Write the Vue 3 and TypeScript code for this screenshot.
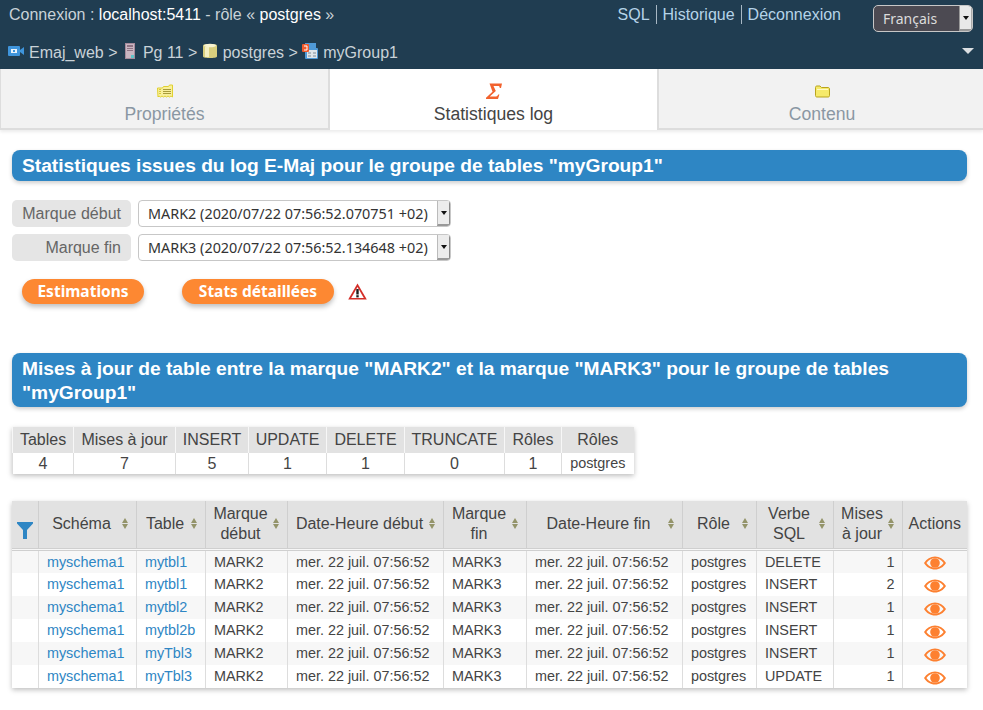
<script setup lang="ts">
const sumHeads = ['Tables', 'Mises à jour', 'INSERT', 'UPDATE', 'DELETE', 'TRUNCATE', 'Rôles', 'Rôles']
const sumVals = ['4', '7', '5', '1', '1', '0', '1', 'postgres']
const sumWidths = [61, 102, 73, 78, 78, 100, 57, 72]
const cols = [26, 98, 69, 82, 156, 83, 156, 74, 77, 69, 65]
const heads = [
  { t: ['Schéma'], s: true },
  { t: ['Table'], s: true },
  { t: ['Marque', 'début'], s: true },
  { t: ['Date-Heure début'], s: true },
  { t: ['Marque', 'fin'], s: true },
  { t: ['Date-Heure fin'], s: true },
  { t: ['Rôle'], s: true },
  { t: ['Verbe', 'SQL'], s: true },
  { t: ['Mises', 'à jour'], s: true },
  { t: ['Actions'], s: false },
]
const rows = [
  ['mytbl1', 'DELETE', '1'],
  ['mytbl1', 'INSERT', '2'],
  ['mytbl2', 'INSERT', '1'],
  ['mytbl2b', 'INSERT', '1'],
  ['myTbl3', 'INSERT', '1'],
  ['myTbl3', 'UPDATE', '1'],
]
const date = 'mer. 22 juil. 07:56:52'
</script>

<template>
  <div class="page">
    <header class="top">
      <div class="line1">
        <div class="conn">Connexion : <b>localhost:5411</b> - rôle « <b>postgres</b> »</div>
        <nav class="links"><a>SQL</a><a>Historique</a><a>Déconnexion</a></nav>
        <div class="lang"><span class="lang-t">Français</span><span class="lang-b"><i></i></span></div>
      </div>
      <div class="crumbs">
        <svg class="ic" width="16" height="16" viewBox="0 0 16 16"><rect x="0" y="3" width="12" height="10" rx="1" fill="#3f95dc"/><rect x="3" y="6" width="6" height="4" fill="#eaf4fc"/><rect x="5" y="7" width="2" height="2" fill="#3f95dc"/><path d="M12 7l4-3v8l-4-3z" fill="#3f95dc"/></svg>
        <span>Emaj_web &gt;</span>
        <svg class="ic" width="16" height="16" viewBox="0 0 16 16"><rect x="3" y="0" width="10" height="16" fill="#a58a9b"/><rect x="4" y="1" width="8" height="14" fill="#c9b6c2"/><rect x="5" y="2" width="6" height="2" fill="#8d7283"/><rect x="5" y="5" width="6" height="1" fill="#8d7283"/><rect x="5" y="7" width="6" height="1" fill="#8d7283"/><rect x="9" y="12" width="3" height="3" fill="#5fc4c9"/></svg>
        <span>Pg 11 &gt;</span>
        <svg class="ic" width="16" height="16" viewBox="0 0 16 16"><path d="M1 2.500C1 .5 15 .5 15 2.500v11c0 2-14 2-14 0z" fill="#d9cf7e"/><path d="M3 4h4v10H3z" fill="#f4efc2"/><ellipse cx="8" cy="2.500" rx="6" ry="1.800" fill="#f8f4d2"/></svg>
        <span>postgres &gt;</span>
        <svg class="ic" width="16" height="16" viewBox="0 0 16 16"><rect x="3" y="0" width="11" height="5" fill="#4f9ad8"/><rect x="3" y="5" width="13" height="11" rx="1" fill="#4f9ad8"/><rect x="5" y="7" width="10" height="8" fill="#dfe4e8"/><path d="M6 10h3M11 10h3M6 13h3M11 13h3" stroke="#7f8a94"/><rect x="0" y="1" width="7" height="8" rx="1" fill="#ef5a2c"/><path d="M2 3h3v4H2" stroke="#fff" fill="none"/></svg>
        <span>myGroup1</span>
        <i class="tri"></i>
      </div>
    </header>

    <div class="tabs">
      <div class="tab">
        <svg width="16" height="14" viewBox="0 0 16 14"><path d="M.5 3.500h5l1-1.500h5l1-1.500h3v12l-1.500-1-1.500 1-1.500-1-1.500 1-1.500-1-1.500 1-1.500-1-1.500 1-1.500-1-1 1z" fill="#f9f09a" stroke="#e0d030"/><path d="M6 5h8M6 7h8M6 9h8" stroke="#a89c3a"/><path d="M2 5h2M2 7h2M2 9h2" stroke="#d8c93a"/></svg>
        <span>Propriétés</span>
      </div>
      <div class="tab on">
        <svg width="16" height="16" viewBox="0 0 16 16"><path d="M3.500 0H16l-1 4.500h-1.300c.1-1.600-.4-2-1.900-2H7.500l2.300 5L3.800 13h5.400c1.600 0 2.300-.5 3-2h1.200L12 15.500H0v-1.200L6.500 8.300z" fill="#f2622e"/></svg>
        <span>Statistiques log</span>
      </div>
      <div class="tab">
        <svg width="15" height="13" viewBox="0 0 15 13"><path d="M.5 10.500V2.500C.5 1.500 1 1 2 1h3l1.500 1.500H13c1 0 1.500.5 1.500 1.500v6.500c0 1-.5 1.500-1.500 1.500H2C1 12 .5 11.500 .5 10.500z" fill="#f6ea6a" stroke="#b9a41f"/><path d="M2 4.500h11" stroke="#fdf9c8"/></svg>
        <span>Contenu</span>
      </div>
    </div>

    <main class="body">
      <h2 class="bar first">Statistiques issues du log E-Maj pour le groupe de tables "myGroup1"</h2>

      <div class="form">
        <div class="frow">
          <label class="flab">Marque début</label>
          <div class="sel"><span>MARK2 (2020/07/22 07:56:52.070751 +02)</span><span class="sel-b"><i></i></span></div>
        </div>
        <div class="frow">
          <label class="flab">Marque fin</label>
          <div class="sel"><span>MARK3 (2020/07/22 07:56:52.134648 +02)</span><span class="sel-b"><i></i></span></div>
        </div>
      </div>

      <div class="actions">
        <button class="btn">Estimations</button>
        <button class="btn second">Stats détaillées</button>
        <svg class="warn" width="19" height="17" viewBox="0 0 19 17"><path d="M9.500 .5L18.800 16.500H.2z" fill="#d42e28"/><path d="M9.500 4L15.800 15H3.200z" fill="#fff"/><path d="M9.500 6v5.500" stroke="#1c1c1c" stroke-width="2.400"/><path d="M9.500 12.200v2.200" stroke="#1c1c1c" stroke-width="2.400"/></svg>
      </div>

      <h2 class="bar second-bar">Mises à jour de table entre la marque "MARK2" et la marque "MARK3" pour le groupe de tables "myGroup1"</h2>

      <table class="tbl sum">
        <colgroup><col v-for="(w, i) in sumWidths" :key="i" :style="{ width: w + 'px' }"></colgroup>
        <thead><tr><th v-for="(h, i) in sumHeads" :key="i">{{ h }}</th></tr></thead>
        <tbody><tr><td v-for="(v, i) in sumVals" :key="i" :class="{ small: i === 7 }">{{ v }}</td></tr></tbody>
      </table>

      <table class="tbl main-t">
        <colgroup><col v-for="(w, i) in cols" :key="i" :style="{ width: w + 'px' }"></colgroup>
        <thead>
          <tr>
            <th class="fil">
              <svg width="16" height="17" viewBox="0 0 16 17"><path d="M0 0h16v1.500L10 8v9H6V8L0 1.500z" fill="#2e86c4"/></svg>
            </th>
            <th v-for="(h, i) in heads" :key="i">
              <div class="hc" :class="{ plain: !h.s }">
                <span class="ht"><span v-for="l in h.t" :key="l" class="hl">{{ l }}</span></span>
                <span v-if="h.s" class="sort"><i class="up"></i><i class="dn"></i></span>
              </div>
            </th>
          </tr>
        </thead>
        <tbody>
          <tr v-for="(r, i) in rows" :key="i">
            <td></td>
            <td class="l"><a>myschema1</a></td>
            <td class="l"><a>{{ r[0] }}</a></td>
            <td class="l">MARK2</td>
            <td class="l">{{ date }}</td>
            <td class="l">MARK3</td>
            <td class="l">{{ date }}</td>
            <td class="l">postgres</td>
            <td class="l">{{ r[1] }}</td>
            <td class="r">{{ r[2] }}</td>
            <td class="eye">
              <svg width="22" height="14" viewBox="0 0 22 14"><path fill-rule="evenodd" d="M0 7c2.600-4.300 6.500-6.500 11-6.500S19.400 2.700 22 7c-2.600 4.300-6.500 6.500-11 6.500S2.600 11.300 0 7zm2.400 0c2.100 2.900 5 4.700 8.600 4.700s6.500-1.800 8.600-4.700c-2.100-2.900-5-4.700-8.600-4.700S4.500 4.100 2.400 7z" fill="#fd8030"/><circle cx="11" cy="7" r="4.800" fill="#fd8030"/></svg>
            </td>
          </tr>
        </tbody>
      </table>
    </main>
  </div>
</template>

<style>
html, body { margin: 0; background: #fff; }
</style>

<style scoped>
.page { width: 983px; height: 710px; overflow: hidden; font-family: "Liberation Sans", Arial, sans-serif; font-size: 16px; color: #444; background: #fff; }
.top { height: 69px; background: #203d51; color: #c9d2d8; box-sizing: border-box; }
.line1 { display: flex; align-items: flex-start; height: 38px; padding-left: 9px; }
.conn { margin-top: 6px; line-height: 18px; flex: 1; }
.conn b { font-weight: normal; color: #fff; }
.links { display: flex; margin-top: 5px; margin-right: 26px; line-height: 19px; color: #b5d3e8; }
.links a { padding: 0 6px; border-left: 1px solid #a8b8c4; }
.links a:first-child { border-left: 0; }
.lang { width: 100px; height: 27px; margin-top: 5px; margin-right: 10px; display: flex; box-sizing: border-box; border: 1px solid #c7c7c7; border-radius: 5px; background: #4c4a52; color: #dcdcdc; overflow: hidden; font-family: "Noto Sans", sans-serif; font-size: 14px; }
.lang-t { flex: 1; padding-left: 9px; line-height: 25px; }
.lang-b { width: 11px; background: #e9e9e9; border-left: 1px solid #999; border-right: 1px solid #aaa; border-bottom: 2px solid #999; display: flex; align-items: center; justify-content: center; }
.lang-b i, .sel-b i { width: 0; height: 0; border: 3px solid transparent; border-top: 4px solid #111; border-bottom: 0; }
.crumbs { display: flex; align-items: center; height: 30px; padding-left: 8px; position: relative; color: #c9d2d8; }
.crumbs span { white-space: pre; margin-right: 4.400px; }
.ic { margin-right: 5px; margin-top: -4px; flex: none; }
.tri { position: absolute; right: 9px; top: 10px; width: 0; height: 0; border-left: 6px solid transparent; border-right: 6px solid transparent; border-top: 6px solid #dcdfe2; }

.tabs { display: grid; grid-template-columns: 328px 329px 1fr; height: 61px; background: #f2f2f2; border-bottom: 2px solid #ddd; box-sizing: border-box; box-shadow: 0 2px 3px rgba(0,0,0,.08); }
.tab { display: flex; flex-direction: column; align-items: center; color: #8a97a3; padding-top: 14px; box-sizing: border-box; height: 61px; font-size: 17.600px; border-left: 1px solid #ddd; }
.tab + .tab { border-left: 2px solid #ddd; }
.tab:last-child { padding-left: 2px; }
.tab svg { height: 17px; }
.tab span { margin-top: 4px; line-height: 20px; }
.tab.on { background: #fff; color: #444; }

.body { padding: 20px 16px 0 12px; }
.bar { margin: 0; background: #2e86c4; color: #fff; font-size: 19.200px; font-weight: bold; line-height: 24px; padding: 4px 10px 3px; border-radius: 8px; box-shadow: 0 2px 4px rgba(0,0,0,.2); }
.form { margin-top: 19px; display: flex; flex-direction: column; gap: 7px; }
.frow { display: flex; gap: 7px; }
.flab { width: 119px; height: 27px; box-sizing: border-box; background: #e5e5e5; border-radius: 5px; text-align: right; padding-right: 10px; line-height: 27px; color: #666; }
.sel { width: 313px; height: 27px; box-sizing: border-box; border: 1px solid #c7c7c7; border-radius: 4px; display: flex; justify-content: space-between; font-family: "Noto Sans", sans-serif; font-size: 14.400px; color: #333; overflow: hidden; }
.sel > span:first-child { padding-left: 9px; line-height: 25px; white-space: nowrap; }
.sel-b { width: 11px; background: #ececec; border-left: 1px solid #bbb; border-right: 1px solid #888; border-bottom: 2px solid #999; display: flex; align-items: center; justify-content: center; }
.actions { margin-top: 18px; display: flex; align-items: center; height: 25px; padding-left: 10px; }
.btn { height: 25px; width: 122px; border: 0; border-radius: 13px; background: #fd8832; color: #fff; font-family: "Noto Sans", sans-serif; font-weight: bold; font-size: 15.500px; padding: 0 0 2px; box-shadow: 0 3px 5px rgba(0,0,0,.25); }
.btn.second { width: 152px; margin-left: 38px; }
.warn { margin-left: 14px; margin-top: 0; }
.second-bar { margin-top: 49px; padding: 4px 10px 2px; }

.tbl { border-collapse: collapse; table-layout: fixed; box-shadow: 0 2px 5px rgba(0,0,0,.25); background: #fff; }
.sum { margin-top: 20px; font-size: 16px; }
.sum th { height: 26px; background: #e2e2e2; font-weight: normal; padding: 0; border-left: 1px solid #f7f7f7; text-align: center; line-height: 26px; }
.sum td { height: 21px; padding: 0; text-align: center; border-left: 1px solid #ddd; line-height: 21px; }
.sum td.small { font-size: 14.400px; }
.main-t { margin-top: 27px; font-size: 14.400px; width: 955px; }
.main-t th { height: 48px; background: #e2e2e2; font-weight: normal; font-size: 16px; padding: 0 0 1px; border-left: 1px solid #cfcfcf; border-bottom: 3px double #cfcfcf; box-sizing: border-box; }
.main-t th:first-child { border-left: 0; }
.fil svg { display: block; margin: 13px auto 0; }
.hc { display: flex; align-items: center; justify-content: center; padding: 0 7px 0 6px; line-height: 20px; gap: 2px; }
.hc.plain { padding: 0; }
.hc .ht { flex: 1; display: flex; flex-direction: column; align-items: center; }
.hl { white-space: nowrap; }
.sort { display: flex; flex-direction: column; gap: 1px; flex: none; width: 8px; align-items: center; }
.sort i { width: 0; height: 0; border-left: 3.500px solid transparent; border-right: 3.500px solid transparent; }
.sort .up { border-bottom: 5px solid #94946a; }
.sort .dn { border-top: 5px solid #94946a; }
.main-t td { height: 23px; padding: 0 7px 0 8.400px; border-left: 1px solid #ddd; box-sizing: border-box; white-space: nowrap; line-height: 22px; }
.main-t td:first-child { border-left: 0; }
.main-t tbody tr:nth-child(odd) { background: #f7f7f7; }
.main-t td.r { text-align: right; }
.main-t td.eye { text-align: center; padding: 0; }
.eye svg { display: block; margin: 3px auto 0; }
.main-t a { color: #2e86c4; }
</style>
